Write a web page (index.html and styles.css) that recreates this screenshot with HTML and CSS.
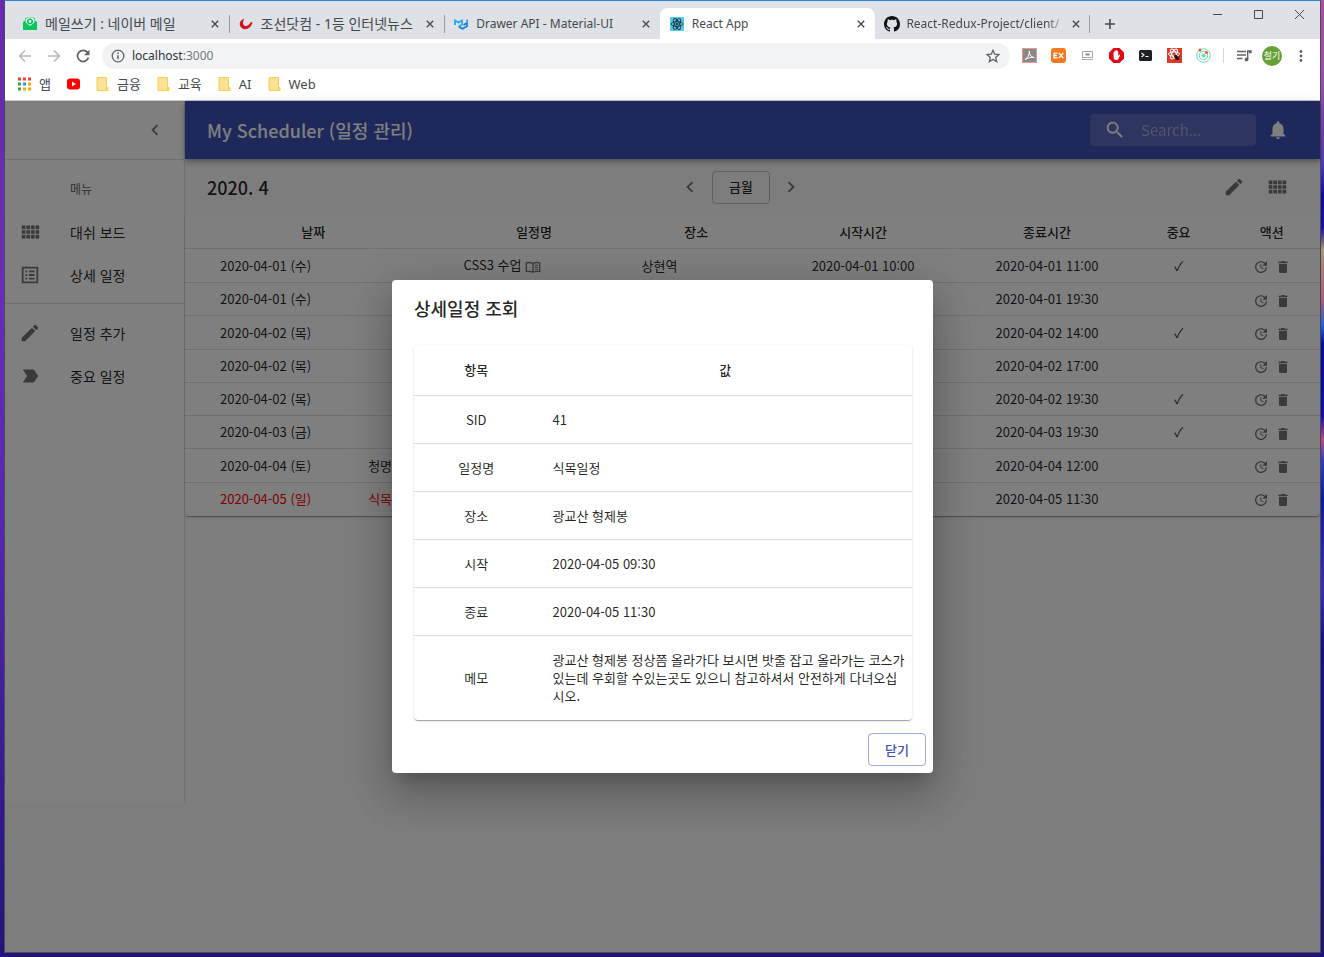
FILE: index.html
```html
<!DOCTYPE html>
<html lang="ko">
<head>
<meta charset="utf-8">
<title>React App</title>
<link rel="stylesheet" href="styles.css">
</head>
<body>
<svg class="sprite" aria-hidden="true">
  <symbol id="i-comfy" viewBox="0 0 24 24"><path d="M3 9h4V5H3v4zm0 5h4v-4H3v4zm5 0h4v-4H8v4zm5 0h4v-4h-4v4zM8 9h4V5H8v4zm5-4v4h4V5h-4zm5 9h4v-4h-4v4zM3 19h4v-4H3v4zm5 0h4v-4H8v4zm5 0h4v-4h-4v4zm5 0h4v-4h-4v4zm0-14v4h4V5h-4z"/></symbol>
  <symbol id="i-list" viewBox="0 0 24 24"><path d="M19 5v14H5V5h14m1.1-2H3.9c-.5 0-.9.4-.9.9v16.2c0 .4.4.9.9.9h16.2c.4 0 .9-.5.9-.9V3.9c0-.5-.5-.9-.9-.9zM11 7h6v2h-6V7zm0 4h6v2h-6v-2zm0 4h6v2h-6zM7 7h2v2H7zm0 4h2v2H7zm0 4h2v2H7z"/></symbol>
  <symbol id="i-pen" viewBox="0 0 24 24"><path d="M3 17.25V21h3.75L17.81 9.94l-3.75-3.75L3 17.25zM20.71 7.04c.39-.39.39-1.02 0-1.41l-2.34-2.34c-.39-.39-1.02-.39-1.41 0l-1.83 1.83 3.75 3.75 1.83-1.83z"/></symbol>
  <symbol id="i-label" viewBox="0 0 24 24"><path d="M4 18.99h11c.67 0 1.27-.32 1.63-.83L21 12l-4.37-6.16C16.27 5.33 15.67 5 15 5H4l5 7-5 6.99z"/></symbol>
  <symbol id="i-left" viewBox="0 0 24 24"><path d="M15.41 7.41L14 6l-6 6 6 6 1.41-1.41L10.83 12z"/></symbol>
  <symbol id="i-right" viewBox="0 0 24 24"><path d="M10 6L8.59 7.41 13.17 12l-4.58 4.59L10 18l6-6z"/></symbol>
  <symbol id="i-search" viewBox="0 0 24 24"><path d="M15.5 14h-.79l-.28-.27C15.41 12.59 16 11.11 16 9.5 16 5.91 13.09 3 9.5 3S3 5.91 3 9.5 5.91 16 9.5 16c1.61 0 3.09-.59 4.23-1.57l.27.28v.79l5 4.99L20.49 19l-4.99-5zm-6 0C7.01 14 5 11.99 5 9.5S7.01 5 9.5 5 14 7.01 14 9.5 11.99 14 9.5 14z"/></symbol>
  <symbol id="i-bell" viewBox="0 0 24 24"><path d="M12 22c1.1 0 2-.9 2-2h-4c0 1.1.89 2 2 2zm6-6v-5c0-3.07-1.64-5.64-4.5-6.32V4c0-.83-.67-1.5-1.5-1.5s-1.5.67-1.5 1.5v.68C7.63 5.36 6 7.92 6 11v5l-2 2v1h16v-1l-2-2z"/></symbol>
  <symbol id="i-trash" viewBox="0 0 24 24"><path d="M6 19c0 1.1.9 2 2 2h8c1.1 0 2-.9 2-2V7H6v12zM19 4h-3.5l-1-1h-5l-1 1H5v2h14V4z"/></symbol>
  <symbol id="i-update" viewBox="0 0 24 24"><path d="M21 10.12h-6.78l2.74-2.82c-2.73-2.7-7.15-2.8-9.88-.1-2.73 2.71-2.73 7.08 0 9.79 2.73 2.71 7.15 2.71 9.88 0C18.32 15.65 19 14.08 19 12.1h2c0 1.98-.88 4.55-2.64 6.29-3.51 3.48-9.21 3.48-12.72 0-3.5-3.47-3.53-9.11-.02-12.58 3.51-3.47 9.14-3.47 12.65 0L21 3v7.12zM12.5 8v4.25l3.5 2.08-.72 1.21L11 13V8h1.5z"/></symbol>
  <symbol id="i-book" viewBox="0 0 24 24"><path fill-rule="evenodd" d="M1 5.2C4.500 3.800 9 4 12 5.500c3-1.500 7.500-1.700 11-.3V20c-3.500-1-8-.8-11 .8-3-1.600-7.500-1.800-11-.8zM3 6.600v11.200c3-.4 5.700-.3 8 .6V7.200C8.700 6.200 6 6.100 3 6.600zm10 .6v11.200c2.300-.9 5-1 8-.6V6.600c-3-.5-5.700-.4-8 .6zM14.500 8.700h5v1.600h-5zm0 3h5v1.600h-5zm0 3h5v1.600h-5z"/></symbol>
  <symbol id="i-x" viewBox="0 0 10 10"><path d="M1 1l8 8M9 1l-8 8" fill="none" stroke="currentColor" stroke-width="1.700"/></symbol>
  <symbol id="i-folder" viewBox="0 0 13 14"><path d="M1 .5h9.500v10H12v3H1z" fill="#fde293" stroke="#f3ce57"/><path d="M10.500 10.500v3" stroke="#f3ce57"/></symbol>
</svg>

<div class="window">
  <header class="tabstrip">
    <div class="tabs">
      <div class="tab">
        <svg class="favicon" viewBox="0 0 14 14"><path d="M0 5l2-1.500V2.500Q2 .5 4 .5h6q2 0 2 2v1L14 5v8H0z" fill="#03c75a"/><path d="M2.500 3.500v2L7 9l4.500-3.500v-2A4.500 3 0 0 0 2.500 3.500z" fill="#e4faed"/><circle cx="7" cy="4.500" r="3" fill="#03c75a"/><circle cx="7" cy="4.500" r="1.400" fill="#fff"/></svg>
        <span class="tab-title hangul">메일쓰기 : 네이버 메일</span>
        <button class="tab-close" aria-label="탭 닫기"><svg><use href="#i-x"/></svg></button>
      </div>
      <div class="tab divided">
        <svg class="favicon" viewBox="0 0 14 14"><path d="M5.500 1.500C1 3 .3 6 1 8.500c1 3.500 5 4.500 8 3 2-1 4-3 4.500-6.500l-2 .5C10 8.500 7.500 9.500 5.500 8.700 3.500 7.800 3.500 4 5.500 1.500z" fill="#d9101e"/></svg>
        <span class="tab-title hangul">조선닷컴 - 1등 인터넷뉴스</span>
        <button class="tab-close" aria-label="탭 닫기"><svg><use href="#i-x"/></svg></button>
      </div>
      <div class="tab divided">
        <svg class="favicon" viewBox="0 0 14 14"><g fill="none" stroke-width="1.700"><path d="M1 8V3.500L4.500 5.500 8 3.500V7.500L5 9.200" stroke="#1fa6f5"/><path d="M5.500 9v1.200L8.500 11.800 13 9.200V6L9.500 8M13 2.800v1.700" stroke="#0f7fd6"/></g></svg>
        <span class="tab-title">Drawer API - Material-UI</span>
        <button class="tab-close" aria-label="탭 닫기"><svg><use href="#i-x"/></svg></button>
      </div>
      <div class="tab active">
        <svg class="favicon" viewBox="0 0 14 14"><rect width="14" height="14" rx="1" fill="#53c9ec"/><g fill="none" stroke="#20323a" stroke-width=".9"><ellipse cx="7" cy="7" rx="6" ry="2.400"/><ellipse cx="7" cy="7" rx="6" ry="2.400" transform="rotate(60 7 7)"/><ellipse cx="7" cy="7" rx="6" ry="2.400" transform="rotate(120 7 7)"/></g><circle cx="7" cy="7" r="1.200" fill="#20323a"/></svg>
        <span class="tab-title">React App</span>
        <button class="tab-close" aria-label="탭 닫기"><svg><use href="#i-x"/></svg></button>
      </div>
      <div class="tab">
        <svg class="favicon" viewBox="0 0 16 16"><path fill="#111" d="M8 0C3.580 0 0 3.580 0 8c0 3.540 2.290 6.530 5.470 7.590.4.070.55-.17.55-.38 0-.19-.01-.82-.01-1.490-2.010.37-2.530-.49-2.690-.94-.09-.23-.48-.94-.82-1.130-.28-.15-.68-.52-.01-.53.63-.01 1.080.58 1.230.82.72 1.210 1.870.87 2.330.66.070-.52.28-.87.51-1.070-1.780-.2-3.640-.89-3.640-3.950 0-.87.31-1.590.82-2.150-.08-.2-.36-1.020.08-2.120 0 0 .67-.21 2.200.82.64-.18 1.320-.27 2-.27s1.360.09 2 .27c1.530-1.040 2.200-.82 2.200-.82.44 1.100.16 1.920.08 2.120.51.56.82 1.270.82 2.150 0 3.070-1.870 3.750-3.650 3.950.29.25.54.73.54 1.480 0 1.070-.01 1.930-.01 2.200 0 .21.15.46.55.38A8.010 8.010 0 0 0 16 8c0-4.420-3.580-8-8-8z"/></svg>
        <span class="tab-title faded">React-Redux-Project/client/</span>
        <button class="tab-close" aria-label="탭 닫기"><svg><use href="#i-x"/></svg></button>
      </div>
    </div>
    <button class="new-tab" aria-label="새 탭"><svg viewBox="0 0 12 12"><path d="M6 1v10M1 6h10" stroke="currentColor" stroke-width="1.600"/></svg></button>
    <div class="window-buttons">
      <button aria-label="최소화"><svg viewBox="0 0 11 11"><path d="M1 5.500h9" stroke="currentColor"/></svg></button>
      <button aria-label="최대화"><svg viewBox="0 0 11 11"><path d="M1.500 1.500h8v8h-8z" fill="none" stroke="currentColor"/></svg></button>
      <button aria-label="닫기"><svg viewBox="0 0 11 11"><path d="M1 1l9 9M10 1l-9 9" stroke="currentColor"/></svg></button>
    </div>
  </header>

  <div class="toolbar">
    <div class="nav">
      <button class="muted" aria-label="뒤로"><svg viewBox="0 0 14 14"><path d="M13 7H2M7 1.500L1.500 7 7 12.500" fill="none" stroke="currentColor" stroke-width="1.500"/></svg></button>
      <button class="muted" aria-label="앞으로"><svg viewBox="0 0 14 14"><path d="M1 7h11M7 1.500L12.500 7 7 12.500" fill="none" stroke="currentColor" stroke-width="1.500"/></svg></button>
      <button aria-label="새로고침"><svg viewBox="0 0 14 14"><path d="M11.800 3.800A5.600 5.600 0 1 0 12.500 8.500" fill="none" stroke="currentColor" stroke-width="1.700"/><path d="M13.500.8v5.400H8.100z" fill="currentColor"/></svg></button>
    </div>
    <div class="omnibox">
      <svg class="info" viewBox="0 0 14 14"><circle cx="7" cy="7" r="5.800" fill="none" stroke="currentColor" stroke-width="1.300"/><path d="M7 6.200v4M7 3.500v1.500" stroke="currentColor" stroke-width="1.500"/></svg>
      <span class="url">localhost<span>:3000</span></span>
      <button class="star" aria-label="북마크"><svg viewBox="0 0 14 14"><path d="M7 1.300l1.700 3.900 4.200.4-3.200 2.800 1 4.200L7 10.400l-3.700 2.200 1-4.200L1.100 5.600l4.200-.4z" fill="none" stroke="currentColor" stroke-width="1.300"/></svg></button>
    </div>
    <div class="extensions">
      <svg viewBox="0 0 15 15"><rect width="15" height="15" fill="#e79a8d"/><rect x="1" y="1" width="13" height="13" fill="#8b8787"/><path d="M3 11.500c2.500-1 4.500-4.500 4.300-8.500 0 4 2 6.300 5 6.500-3-.7-6 .3-9.300 2z" fill="none" stroke="#fff" stroke-width="1"/></svg>
      <svg viewBox="0 0 15 15"><rect width="15" height="15" rx="3" fill="#f5791f"/><path d="M6.500 5.200H3v4.600h3.500M3 7.500h3M8 5l4.200 5M12.200 5L8 10" fill="none" stroke="#fff" stroke-width="1.300"/></svg>
      <svg viewBox="0 0 15 15"><path d="M2.500 3.500h10v6h-10z" fill="#fff" stroke="#a5a5a5"/><path d="M5.500 5.500h4v2h-4z" fill="#888"/><path d="M2 11.500h11" stroke="#aaa"/></svg>
      <svg viewBox="0 0 15 15"><path d="M4.500 0h6L15 4.500v6L10.500 15h-6L0 10.500v-6z" fill="#e30613"/><path d="M4.500 7V4.500q.5-.8 1 0V3q.6-.9 1.200 0v-.5q.7-.9 1.300 0V3q.7-.7 1.200.2V8l1-1.300q1.200-.4.8.8L9 11.700q-3 1.200-4.200-1z" fill="#fff"/></svg>
      <svg viewBox="0 0 15 15"><rect x="1" y="2" width="13" height="11" rx="1.500" fill="#1c2022"/><path d="M3.500 5l2.500 2-2.500 2M7.500 8.500h3" fill="none" stroke="#fff" stroke-width="1.100"/></svg>
      <svg viewBox="0 0 15 15"><rect width="15" height="15" fill="#dc3a2b"/><g fill="none" stroke="#fff"><ellipse cx="7" cy="6" rx="5.500" ry="2.200"/><ellipse cx="7" cy="6" rx="5.500" ry="2.200" transform="rotate(60 7 6)"/><ellipse cx="7" cy="6" rx="5.500" ry="2.200" transform="rotate(120 7 6)"/></g><ellipse cx="9.500" cy="9.500" rx="1.800" ry="3" fill="#2a1513" transform="rotate(-35 9.500 9.500)"/><path d="M7 8l6 3.500M8 12l5-4" stroke="#2a1513" stroke-width=".7"/></svg>
      <svg viewBox="0 0 15 15"><g fill="none" stroke="#5fe3ac"><circle cx="7.500" cy="7.500" r="6.800"/><circle cx="7.500" cy="7.500" r="4.200"/></g><circle cx="7.500" cy="7.500" r="2" fill="#5fe3ac"/><circle cx="4" cy="2" r="1.500" fill="#f0502d"/><circle cx="10.500" cy="4.500" r="1.500" fill="#f0502d"/></svg>
    </div>
    <div class="profile">
      <button aria-label="미디어"><svg viewBox="0 0 16 14"><path d="M1 2.500h9M1 6h9M1 9.500h5.500" stroke="currentColor" stroke-width="1.500"/><path d="M11.700 10.500V2h3.300v1.500h-2" fill="none" stroke="currentColor" stroke-width="1.400"/><circle cx="10.500" cy="10.500" r="1.900" fill="currentColor"/></svg></button>
      <button class="avatar">철기</button>
      <button aria-label="메뉴"><svg viewBox="0 0 16 14"><circle cx="8" cy="2.500" r="1.400"/><circle cx="8" cy="7" r="1.400"/><circle cx="8" cy="11.500" r="1.400"/></svg></button>
    </div>
  </div>

  <nav class="bookmarks">
    <a href="#"><svg viewBox="0 0 13 13"><path d="M0 0h3v3H0zM5 0h3v3H5zM10 0h3v3h-3z" fill="#ea4335"/><path d="M0 5h3v3H0zM0 10h3v3H0z" fill="#34a853"/><path d="M5 5h3v3H5z" fill="#4285f4"/><path d="M10 5h3v3h-3zM5 10h3v3H5zM10 10h3v3h-3z" fill="#f9ab00"/></svg>앱</a>
    <a href="#" aria-label="YouTube"><svg viewBox="0 0 13 13"><rect y="1" width="13" height="11" rx="3" fill="#f00"/><path d="M5 4l4 2.500L5 9z" fill="#fff"/></svg></a>
    <a href="#"><svg><use href="#i-folder"/></svg>금융</a>
    <a href="#"><svg><use href="#i-folder"/></svg>교육</a>
    <a href="#"><svg><use href="#i-folder"/></svg>AI</a>
    <a href="#"><svg><use href="#i-folder"/></svg>Web</a>
  </nav>

  <div class="app">
    <aside class="drawer">
      <div class="drawer-head"><button class="icon-btn" aria-label="메뉴 접기"><svg><use href="#i-left"/></svg></button></div>
      <div class="menu">
        <h2>메뉴</h2>
        <a href="#"><svg><use href="#i-comfy"/></svg>대쉬 보드</a>
        <a href="#"><svg><use href="#i-list"/></svg>상세 일정</a>
      </div>
      <div class="menu">
        <a href="#"><svg><use href="#i-pen"/></svg>일정 추가</a>
        <a href="#"><svg><use href="#i-label"/></svg>중요 일정</a>
      </div>
    </aside>
    <main class="content">
      <div class="appbar">
        <h1>My Scheduler (일정 관리)</h1>
        <label class="search"><svg><use href="#i-search"/></svg><input type="text" placeholder="Search..." aria-label="Search"></label>
        <button class="icon-btn" aria-label="알림"><svg><use href="#i-bell"/></svg></button>
      </div>
      <div class="monthbar">
        <h2>2020. 4</h2>
        <div class="group">
          <button class="icon-btn" aria-label="이전 달"><svg><use href="#i-left"/></svg></button>
          <button class="outlined">금월</button>
          <button class="icon-btn" aria-label="다음 달"><svg><use href="#i-right"/></svg></button>
        </div>
        <div class="group">
          <button class="icon-btn" aria-label="일정 추가"><svg><use href="#i-pen"/></svg></button>
          <button class="icon-btn" aria-label="대쉬 보드"><svg><use href="#i-comfy"/></svg></button>
        </div>
      </div>
      <table class="schedule">
        <colgroup><col class="c-date"><col class="c-day"><col class="c-name"><col class="c-place"><col class="c-start"><col class="c-end"><col class="c-flag"><col class="c-act"></colgroup>
        <thead><tr><th colspan="2">날짜</th><th>일정명</th><th>장소</th><th>시작시간</th><th>종료시간</th><th>중요</th><th>액션</th></tr></thead>
        <tbody>
          <tr><td>2020-04-01 (수)</td><td class="day"></td><td class="name">CSS3 수업 <svg class="book"><use href="#i-book"/></svg></td><td class="place">상현역</td><td>2020-04-01 10:00</td><td>2020-04-01 11:00</td><td>✓</td><td class="act"><button aria-label="수정"><svg><use href="#i-update"/></svg></button><button aria-label="삭제"><svg><use href="#i-trash"/></svg></button></td></tr>
          <tr><td>2020-04-01 (수)</td><td class="day"></td><td class="name"></td><td class="place"></td><td></td><td>2020-04-01 19:30</td><td></td><td class="act"><button aria-label="수정"><svg><use href="#i-update"/></svg></button><button aria-label="삭제"><svg><use href="#i-trash"/></svg></button></td></tr>
          <tr><td>2020-04-02 (목)</td><td class="day"></td><td class="name"></td><td class="place"></td><td></td><td>2020-04-02 14:00</td><td>✓</td><td class="act"><button aria-label="수정"><svg><use href="#i-update"/></svg></button><button aria-label="삭제"><svg><use href="#i-trash"/></svg></button></td></tr>
          <tr><td>2020-04-02 (목)</td><td class="day"></td><td class="name"></td><td class="place"></td><td></td><td>2020-04-02 17:00</td><td></td><td class="act"><button aria-label="수정"><svg><use href="#i-update"/></svg></button><button aria-label="삭제"><svg><use href="#i-trash"/></svg></button></td></tr>
          <tr><td>2020-04-02 (목)</td><td class="day"></td><td class="name"></td><td class="place"></td><td></td><td>2020-04-02 19:30</td><td>✓</td><td class="act"><button aria-label="수정"><svg><use href="#i-update"/></svg></button><button aria-label="삭제"><svg><use href="#i-trash"/></svg></button></td></tr>
          <tr><td>2020-04-03 (금)</td><td class="day"></td><td class="name"></td><td class="place"></td><td></td><td>2020-04-03 19:30</td><td>✓</td><td class="act"><button aria-label="수정"><svg><use href="#i-update"/></svg></button><button aria-label="삭제"><svg><use href="#i-trash"/></svg></button></td></tr>
          <tr><td>2020-04-04 (토)</td><td class="day">청명</td><td class="name"></td><td class="place"></td><td></td><td>2020-04-04 12:00</td><td></td><td class="act"><button aria-label="수정"><svg><use href="#i-update"/></svg></button><button aria-label="삭제"><svg><use href="#i-trash"/></svg></button></td></tr>
          <tr><td class="holiday">2020-04-05 (일)</td><td class="day holiday">식목일</td><td class="name"></td><td class="place"></td><td></td><td>2020-04-05 11:30</td><td></td><td class="act"><button aria-label="수정"><svg><use href="#i-update"/></svg></button><button aria-label="삭제"><svg><use href="#i-trash"/></svg></button></td></tr>
        </tbody>
      </table>
    </main>

    <div class="backdrop">
      <section class="dialog" role="dialog" aria-labelledby="dlg-title">
        <h2 id="dlg-title">상세일정 조회</h2>
        <table class="detail">
          <thead><tr><th>항목</th><th>값</th></tr></thead>
          <tbody>
            <tr><td>SID</td><td>41</td></tr>
            <tr><td>일정명</td><td>식목일정</td></tr>
            <tr><td>장소</td><td>광교산 형제봉</td></tr>
            <tr><td>시작</td><td>2020-04-05 09:30</td></tr>
            <tr><td>종료</td><td>2020-04-05 11:30</td></tr>
            <tr><td>메모</td><td>광교산 형제봉 정상쯤 올라가다 보시면 밧줄 잡고 올라가는 코스가 있는데 우회할 수있는곳도 있으니 참고하셔서 안전하게 다녀오십시오.</td></tr>
          </tbody>
        </table>
        <div class="actions"><button class="outlined primary">닫기</button></div>
      </section>
    </div>
  </div>
</div>
</body>
</html>
```
FILE: styles.css
```css
* { box-sizing: border-box; }

body {
  margin: 0;
  min-height: 100vh;
  padding: 0 3px 4px 4px;
  display: flex;
  background:
    linear-gradient(180deg, #b04f9a 0, #9a4fae 80px, #5a3fc0 160px, #0a0aa0 195px, #1a10a8 228px, #a89a70 250px, #b05a80 300px, #1c6ad8 325px, #0808a0 345px, #0c10b0 415px, #c04a80 440px, #3040c0 460px, #0a1aa8 500px, #3a30b8 590px, #150f88 640px, #1c1570 100%) right / 4px 100% no-repeat,
    linear-gradient(180deg, #6a2ab0 0, #6a2cb4 300px, #5a28b0 500px, #35198f 800px, #24157a 100%);
  font-family: "Noto Sans CJK KR", sans-serif;
  font-size: 13px;
  line-height: 18px;
  color: rgba(0, 0, 0, .87);
}

button {
  border: 0;
  padding: 0;
  background: none;
  font: inherit;
  color: inherit;
  display: inline-flex;
  align-items: center;
  justify-content: center;
}

a { color: inherit; text-decoration: none; }
h1, h2 { margin: 0; font-weight: 500; }
svg { fill: currentColor; flex: none; display: block; }
.sprite { position: absolute; width: 0; height: 0; }

.window {
  flex: 1;
  min-width: 0;
  display: flex;
  flex-direction: column;
  border: 1px solid #4b4a5c;
  border-top-color: #2f86d6;
  background: #fff;
}

/* browser tabs */
.tabstrip {
  display: flex;
  height: 38px;
  padding: 7px 0 0 8px;
  background: #dee1e6;
  color: #45494d;
  font-family: "Noto Sans", "Noto Sans CJK KR", sans-serif;
}
.tabs { display: flex; flex: 0 1 1077px; min-width: 0; }
.tab {
  flex: 1 1 0;
  min-width: 0;
  display: flex;
  align-items: center;
  gap: 8px;
  padding: 0 10px;
  background: linear-gradient(#9a9da1, #9a9da1) left center / 0 18px no-repeat;
}
.tab.divided, .tab:last-child { background-size: 1px 18px; }
.tab:last-child { gap: 6px; padding-left: 9px; background-position: right center; }
.tab.active { background: #fff; border-radius: 8px 8px 0 0; }
.favicon { width: 14px; height: 14px; }
.tab:last-child .favicon { width: 16px; height: 16px; }
.tab-title { flex: 1; min-width: 0; overflow: hidden; white-space: nowrap; font-size: 12px; }
.hangul { font-size: 14px; }
.faded { mask-image: linear-gradient(90deg, #000 88%, transparent); }
.tab-close svg { width: 8px; height: 8px; }
.new-tab { width: 40px; }
.new-tab svg { width: 12px; height: 12px; }
.window-buttons { display: flex; margin-left: auto; height: 12px; }
.window-buttons button { width: 41px; }
.window-buttons svg { width: 11px; height: 11px; }

/* address bar */
.toolbar {
  display: flex;
  align-items: center;
  height: 33px;
  padding-right: 5px;
  color: #5f6368;
}
.nav { display: flex; width: 97px; padding-left: 5px; }
.nav button { width: 29px; }
.nav svg { width: 14px; height: 14px; }
.muted { color: #b5b7ba; }
.omnibox {
  flex: 1;
  display: flex;
  align-items: center;
  height: 26px;
  padding: 0 10px 0 9px;
  gap: 7px;
  border-radius: 13px;
  background: #f1f3f4;
}
.info, .star svg { width: 14px; height: 14px; }
.url { flex: 1; color: #303338; font-family: "Noto Sans", sans-serif; font-size: 12px; }
.url span { color: #75797e; }
.extensions { display: flex; gap: 14px; padding: 0 12px; border-right: 1px solid #d5d7da; }
.extensions svg { width: 15px; height: 15px; }
.profile { display: flex; padding-left: 5px; }
.profile button { width: 29px; }
.profile svg { width: 16px; height: 14px; }
.profile .avatar {
  width: 20px;
  height: 20px;
  margin: 0 4px;
  border-radius: 50%;
  background: #67a135;
  color: #fff;
  font-size: 9px;
}

.bookmarks {
  display: flex;
  align-items: center;
  gap: 16px;
  height: 29px;
  padding: 0 13px 4px;
  border-bottom: 1px solid #c5c8cc;
  color: #45494d;
  font-family: "Noto Sans", "Noto Sans CJK KR", sans-serif;
  font-size: 13px;
}
.bookmarks a { display: flex; align-items: center; gap: 8px; }
.bookmarks svg { width: 13px; height: 14px; }

/* application */
.app { position: relative; flex: 1; display: flex; align-items: flex-start; background: #fafafa; }
.icon-btn { width: 43px; height: 43px; color: rgba(0, 0, 0, .54); }
.icon-btn svg { width: 22px; height: 22px; }

.drawer {
  flex: none;
  width: 180px;
  min-height: 701px;
  background: #fff;
  border-right: 1px solid rgba(0, 0, 0, .12);
}
.drawer-head { display: flex; align-items: center; justify-content: flex-end; height: 58px; padding-right: 8px; }
.menu { padding: 7px 0; border-top: 1px solid rgba(0, 0, 0, .12); }
.menu h2 { padding: 12px 0 12px 65px; font-size: 12px; line-height: 19px; color: rgba(0, 0, 0, .54); }
.menu a { display: flex; align-items: center; gap: 29px; height: 43px; padding-left: 14px; font-size: 14px; }
.menu svg { width: 22px; height: 22px; color: rgba(0, 0, 0, .54); }

.content { flex: 1; min-width: 0; }
.appbar {
  position: relative;
  display: flex;
  align-items: center;
  height: 58px;
  padding: 0 21px 0 22px;
  background: #3f51b5;
  color: #fff;
  box-shadow: 0 2px 4px -1px rgba(0, 0, 0, .2), 0 4px 5px rgba(0, 0, 0, .14), 0 1px 10px rgba(0, 0, 0, .12);
}
.appbar h1 { flex: 1; font-size: 18px; line-height: 28px; }
.appbar .icon-btn { color: inherit; }
.search {
  display: flex;
  align-items: center;
  gap: 15px;
  width: 166px;
  height: 32px;
  padding: 0 14px;
  border-radius: 4px;
  background: rgba(255, 255, 255, .15);
}
.search svg { width: 22px; height: 22px; }
.search input {
  flex: 1;
  min-width: 0;
  padding: 0;
  border: 0;
  background: none;
  font: inherit;
  font-size: 15px;
  color: inherit;
}
.search input::placeholder { color: inherit; opacity: .42; }

.monthbar { display: flex; align-items: center; justify-content: space-between; height: 56px; padding: 0 21px 0 22px; }
.monthbar h2 { font-size: 18px; }
.group { display: flex; align-items: center; }
.outlined {
  min-width: 58px;
  height: 33px;
  border: 1px solid rgba(0, 0, 0, .23);
  border-radius: 4px;
  font-weight: 500;
}
.primary { color: #3f51b5; border-color: rgba(63, 81, 181, .5); }

table { border-collapse: separate; border-spacing: 0; table-layout: fixed; width: 100%; background: #fff; border-radius: 4px; }
table { box-shadow: 0 2px 1px -1px rgba(0, 0, 0, .2), 0 1px 1px rgba(0, 0, 0, .14), 0 1px 3px rgba(0, 0, 0, .12); }
th, td { padding: 0; border-bottom: 1px solid #e0e0e0; text-align: center; }
th { font-weight: 500; }
tbody tr:last-child td { border-bottom-color: transparent; }

.schedule { height: 301px; }
.schedule thead tr { height: 34px; }
.c-date { width: 14.2%; }
.c-day { width: 8.4%; }
.c-name { width: 16.3%; }
.c-place { width: 12.3%; }
.c-start { width: 17.1%; }
.c-end { width: 15.3%; }
.c-flag { width: 7.9%; }
.c-act { width: 8.5%; }
.schedule .day, .schedule .name { text-align: left; padding-left: 22px; }
.schedule .place { text-align: left; padding-left: 15px; }
.holiday { color: #f00; }
.book { display: inline-block; width: 16px; height: 16px; vertical-align: -5px; color: rgba(0, 0, 0, .54); }
.act button { margin: 0 3px; vertical-align: middle; color: rgba(0, 0, 0, .54); }
.act svg { width: 16px; height: 16px; }

/* modal */
.backdrop {
  position: absolute;
  inset: 0;
  display: flex;
  align-items: center;
  justify-content: center;
  background: rgba(0, 0, 0, .5);
}
.dialog {
  width: 541px;
  padding: 14px 7px 7px;
  border-radius: 4px;
  background: #fff;
  box-shadow: 0 11px 15px -7px rgba(0, 0, 0, .2), 0 24px 38px 3px rgba(0, 0, 0, .14), 0 9px 46px 8px rgba(0, 0, 0, .12);
}
.dialog h2 { padding: 0 15px; font-size: 18px; line-height: 28px; }
.detail { width: calc(100% - 29px); margin: 23px 14px 13px 15px; }
.detail th { padding: 16px 14px; }
.detail td { padding: 15px 14px 14px; }
.detail th:first-child { width: 25%; }
.detail td:last-child { padding-right: 4px; text-align: left; }
.actions { display: flex; justify-content: flex-end; }
```
